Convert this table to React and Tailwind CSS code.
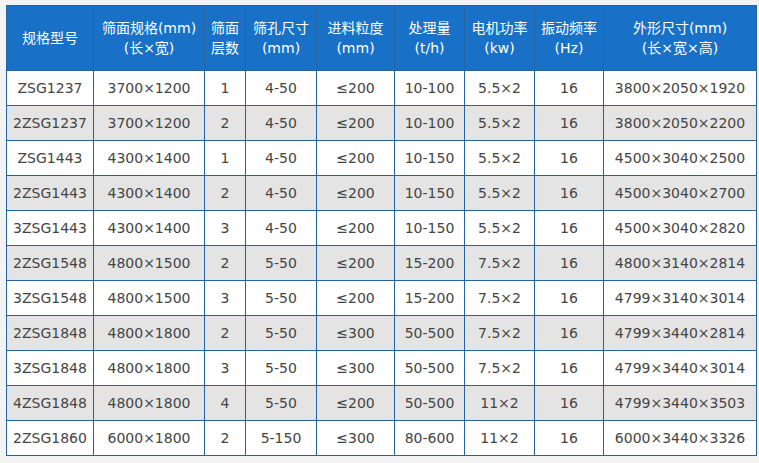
import React from 'react';

const head = [
  ['规格型号'],
  ['筛面规格(mm)', '(长×宽)'],
  ['筛面', '层数'],
  ['筛孔尺寸', '(mm)'],
  ['进料粒度', '(mm)'],
  ['处理量', '(t/h)'],
  ['电机功率', '(kw)'],
  ['振动频率', '(Hz)'],
  ['外形尺寸(mm)', '(长×宽×高)'],
];

const widths = [87, 111, 41, 71, 78, 70, 70, 69, 153];

const rows = [
  ['ZSG1237', '3700×1200', '1', '4-50', '≤200', '10-100', '5.5×2', '16', '3800×2050×1920'],
  ['2ZSG1237', '3700×1200', '2', '4-50', '≤200', '10-100', '5.5×2', '16', '3800×2050×2200'],
  ['ZSG1443', '4300×1400', '1', '4-50', '≤200', '10-150', '5.5×2', '16', '4500×3040×2500'],
  ['2ZSG1443', '4300×1400', '2', '4-50', '≤200', '10-150', '5.5×2', '16', '4500×3040×2700'],
  ['3ZSG1443', '4300×1400', '3', '4-50', '≤200', '10-150', '5.5×2', '16', '4500×3040×2820'],
  ['2ZSG1548', '4800×1500', '2', '5-50', '≤200', '15-200', '7.5×2', '16', '4800×3140×2814'],
  ['3ZSG1548', '4800×1500', '3', '5-50', '≤200', '15-200', '7.5×2', '16', '4799×3140×3014'],
  ['2ZSG1848', '4800×1800', '2', '5-50', '≤300', '50-500', '7.5×2', '16', '4799×3440×2814'],
  ['3ZSG1848', '4800×1800', '3', '5-50', '≤300', '50-500', '7.5×2', '16', '4799×3440×3014'],
  ['4ZSG1848', '4800×1800', '4', '5-50', '≤200', '50-500', '11×2', '16', '4799×3440×3503'],
  ['2ZSG1860', '6000×1800', '2', '5-150', '≤300', '80-600', '11×2', '16', '6000×3440×3326'],
];

export default function App() {
  return (
    <div className="w-[759px] h-[463px] bg-[#f3f3f3] pt-[5px] pl-[6px]">
      <table className="table-fixed border-collapse w-[751px] font-['DejaVu_Sans','Noto_Sans_CJK_SC',sans-serif]">
        <colgroup>
          {widths.map((w, i) => (
            <col key={i} style={{ width: w }} />
          ))}
        </colgroup>
        <thead>
          <tr className="h-[65px] bg-[#1871c6] text-white">
            {head.map((h, i) => (
              <th
                key={i}
                className="border border-[#2563a0] p-0 text-[14px] leading-[20px] font-normal whitespace-nowrap"
              >
                {h.map((t, j) => (
                  <div key={j}>{t}</div>
                ))}
              </th>
            ))}
          </tr>
        </thead>
        <tbody>
          {rows.map((r, i) => (
            <tr key={i} className={`h-[35px] ${i % 2 ? 'bg-[#e4e4e4]' : 'bg-white'}`}>
              {r.map((c, j) => (
                <td
                  key={j}
                  className="border border-[#2563a0] p-0 text-center text-[14px] text-[#444444] whitespace-nowrap"
                >
                  {c}
                </td>
              ))}
            </tr>
          ))}
        </tbody>
      </table>
    </div>
  );
}
